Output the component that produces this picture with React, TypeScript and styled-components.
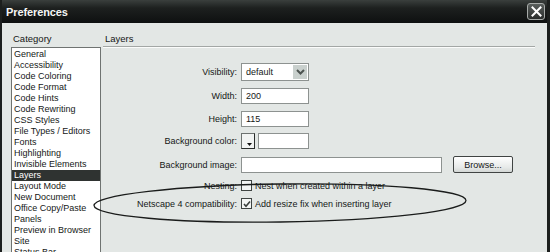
import React from "react";
import styled, { createGlobalStyle } from "styled-components";

const GlobalStyle = createGlobalStyle`
  html, body {
    margin: 0;
    padding: 0;
    background: #e3e7e5;
  }
  * {
    box-sizing: border-box;
  }
`;

const categories = [
  "General",
  "Accessibility",
  "Code Coloring",
  "Code Format",
  "Code Hints",
  "Code Rewriting",
  "CSS Styles",
  "File Types / Editors",
  "Fonts",
  "Highlighting",
  "Invisible Elements",
  "Layers",
  "Layout Mode",
  "New Document",
  "Office Copy/Paste",
  "Panels",
  "Preview in Browser",
  "Site",
  "Status Bar",
];

const App: React.FC = () => {
  return (
    <>
      <GlobalStyle />
      <Window>
        <TitleBar>
          <Title>Preferences</Title>
          <CloseButton>
            <svg width="11" height="11" viewBox="0 0 11 11">
              <path
                d="M1.5 1.5 L9.5 9.5 M9.5 1.5 L1.5 9.5"
                stroke="#fff"
                strokeWidth="2"
                strokeLinecap="square"
              />
            </svg>
          </CloseButton>
        </TitleBar>

        <Body>
          <Sidebar>
            <Heading>Category</Heading>
            <ListBox>
              {categories.map((c) => (
                <ListItem key={c} $selected={c === "Layers"}>
                  {c}
                </ListItem>
              ))}
            </ListBox>
          </Sidebar>

          <Panel>
            <PanelHeading>Layers</PanelHeading>
            <Form>
              <Row $mt={16}>
                <Label>Visibility:</Label>
                <Select>
                  <span>default</span>
                  <SelectArrow>
                    <svg width="9" height="6" viewBox="0 0 9 6">
                      <path
                        d="M1 1 L4.5 4.5 L8 1"
                        stroke="#4d5451"
                        strokeWidth="2"
                        fill="none"
                      />
                    </svg>
                  </SelectArrow>
                </Select>
              </Row>
              <Row $mt={7}>
                <Label>Width:</Label>
                <TextInput $width={68}>200</TextInput>
              </Row>
              <Row $mt={7}>
                <Label>Height:</Label>
                <TextInput $width={68}>115</TextInput>
              </Row>
              <Row $mt={6}>
                <Label>Background color:</Label>
                <Swatch>
                  <svg width="5" height="3" viewBox="0 0 5 3">
                    <path d="M0 0 L5 0 L2.5 3 Z" fill="#111" />
                  </svg>
                </Swatch>
                <TextInput $width={51} />
              </Row>
              <Row $mt={7}>
                <Label>Background image:</Label>
                <TextInput $width={201} />
                <Button>Browse...</Button>
              </Row>
              <CheckRow $mt={6}>
                <Label>Nesting:</Label>
                <Checkbox />
                <CheckText>Nest when created within a layer</CheckText>
              </CheckRow>
              <CheckRow $mt={5}>
                <Label>Netscape 4 compatibility:</Label>
                <Checkbox>
                  <svg width="8" height="8" viewBox="0 0 8 8">
                    <path
                      d="M1 4 L3 6.3 L7 1.5"
                      stroke="#3b403e"
                      strokeWidth="1.6"
                      fill="none"
                    />
                  </svg>
                </Checkbox>
                <CheckText>Add resize fix when inserting layer</CheckText>
              </CheckRow>
            </Form>
          </Panel>
        </Body>

        <Annotation width="550" height="252" viewBox="0 0 550 252">
          <ellipse
            cx="280"
            cy="203"
            rx="186"
            ry="19"
            transform="rotate(-0.8 280 203)"
            fill="none"
            stroke="#1a1c1b"
            strokeWidth="1.3"
          />
        </Annotation>
      </Window>
    </>
  );
};

const Window = styled.div`
  position: relative;
  width: 550px;
  height: 252px;
  overflow: hidden;
  background: #e3e7e5;
  border-left: 2px solid #1c1f1e;
  border-right: 3px solid #1c1f1e;
  font-family: "Liberation Sans", Arial, sans-serif;
  font-size: 9px;
  color: #151716;
`;

const TitleBar = styled.div`
  display: flex;
  align-items: center;
  justify-content: space-between;
  height: 23px;
  padding: 0 2px 0 4px;
  background: linear-gradient(#3a3f3d 0%, #1d201f 35%, #0e1010 100%);
`;

const Title = styled.div`
  color: #f4f6f5;
  font-size: 11px;
  font-weight: 700;
  letter-spacing: -0.1px;
`;

const CloseButton = styled.div`
  display: flex;
  align-items: center;
  justify-content: center;
  width: 18px;
  height: 17px;
  border: 1px solid #a7aba9;
  border-radius: 3px;
  background: linear-gradient(#5a5f5d, #2a2d2c);
`;

const Body = styled.div`
  display: flex;
  padding: 10px 0 0 9px;
`;

const Sidebar = styled.div`
  width: 90px;
  flex-shrink: 0;
`;

const Heading = styled.div`
  height: 14px;
  padding-left: 2px;
  font-size: 9.5px;
`;

const ListBox = styled.div`
  border: 1px solid #6f7371;
  background: #fff;
  padding-top: 1px;
  height: 240px;
`;

const ListItem = styled.div<{ $selected?: boolean }>`
  height: 11px;
  line-height: 11px;
  padding-left: 2px;
  white-space: nowrap;
  background: ${(p) => (p.$selected ? "#2f3331" : "transparent")};
  color: ${(p) => (p.$selected ? "#fff" : "#151716")};
`;

const Panel = styled.div`
  flex: 1;
  padding-left: 2px;
  padding-right: 12px;
`;

const PanelHeading = styled.div`
  height: 14px;
  padding-left: 2px;
  font-size: 9.5px;
  border-bottom: 1px solid #a3a7a5;
  box-shadow: 0 1px 0 #fbfcfb;
`;

const Form = styled.div`
  display: flex;
  flex-direction: column;
`;

const Row = styled.div<{ $mt: number }>`
  display: flex;
  align-items: center;
  gap: 3px;
  margin-top: ${(p) => p.$mt}px;
`;

const CheckRow = styled(Row)`
  height: 13px;
`;

const Label = styled.div`
  width: 134px;
  margin-right: 1px;
  text-align: right;
  white-space: nowrap;
`;

const Select = styled.div`
  display: flex;
  align-items: center;
  justify-content: space-between;
  width: 68px;
  height: 18px;
  padding: 1px 1px 1px 4px;
  border: 1px solid #8d9290;
  background: #fff;
`;

const SelectArrow = styled.div`
  display: flex;
  align-items: center;
  justify-content: center;
  width: 14px;
  height: 14px;
  background: #c9d0cd;
`;

const TextInput = styled.div<{ $width: number }>`
  width: ${(p) => p.$width}px;
  height: 16px;
  line-height: 14px;
  padding-left: 4px;
  border: 1px solid #8d9290;
  background: #fff;
`;

const Swatch = styled.div`
  display: flex;
  align-items: flex-end;
  justify-content: flex-end;
  width: 14px;
  height: 16px;
  padding: 0 2px 2px 0;
  border: 1px solid #6d7270;
  border-right-color: #2a2d2c;
  border-bottom-color: #2a2d2c;
  background: #f2f4f3;
`;

const Button = styled.div`
  display: flex;
  align-items: center;
  justify-content: center;
  width: 60px;
  height: 17px;
  margin-left: 8px;
  border: 1px solid #404443;
  border-radius: 2px;
  background: linear-gradient(#ffffff, #e6e9e8 70%, #d3d7d5);
`;

const Checkbox = styled.div`
  display: flex;
  align-items: center;
  justify-content: center;
  width: 11px;
  height: 11px;
  border: 1px solid #3f4442;
  background: #f4f6f5;
`;

const CheckText = styled.div`
  white-space: nowrap;
`;

const Annotation = styled.svg`
  position: absolute;
  left: -2px;
  top: 0;
  pointer-events: none;
`;

export default App;
